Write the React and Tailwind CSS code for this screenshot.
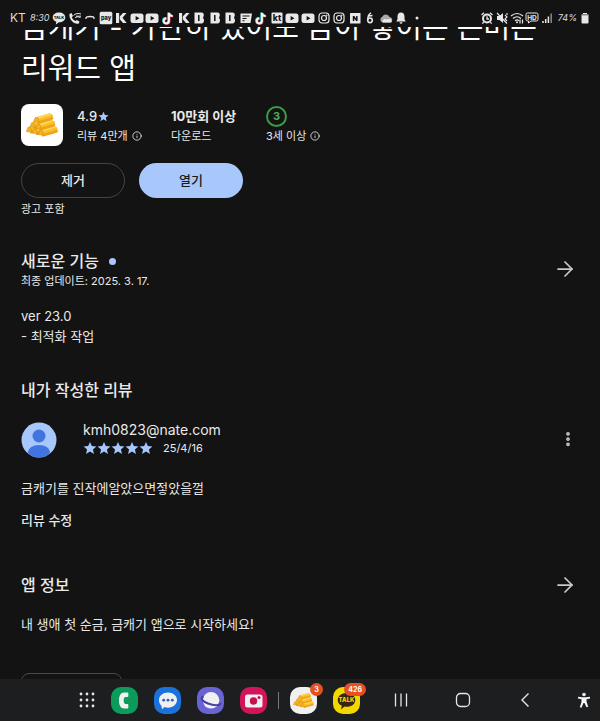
import { ArrowRight, Info, EllipsisVertical } from 'lucide-react';

const FONT = "font-['Inter','Noto_Sans_CJK_KR',sans-serif]";
const STAR = 'M12 1.5l3.1 7.2 7.9.7-6 5.1 1.8 7.7-6.8-4.1-6.8 4.1L7 14.5 1 9.4l7.9-.7z';

function Star({ className }) {
  return (
    <svg viewBox="0 0 24 24" className={className} fill="#a8c7fa">
      <path d={STAR} />
    </svg>
  );
}

function GoldBars({ className }) {
  // back to front, each pair is where the near end of a bar sits
  const bars = [
    [8, 25], [13.5, 26.5], [19.5, 28], [11.5, 20.5], [17, 22], [15, 15.5],
  ];
  return (
    <svg viewBox="0 0 41 41" className={className}>
      {bars.map(([x, y]) => (
        <g key={`${x}-${y}`}>
          <path d={`M${x} ${y - 2.5}l13-4 2.500 1.500 1 3.500-1 1.500-14 4z`} fill="#efa51a" />
          <path d={`M${x} ${y - 2.5}l13-4 2.500 1.500.5 2-13.500 4z`} fill="#fbc02d" />
          <path d={`M${x} ${y - 2.5}l13-4 2 1.200-13.200 4z`} fill="#ffdb62" />
          <path d={`M${x - 1} ${y - 2.5}l2.500.4 1.300 4.800-5.600-.9z`} fill="#f5b21f" stroke="#d48a10" strokeWidth=".5" strokeLinejoin="round" />
        </g>
      ))}
    </svg>
  );
}

function StatusIcon({ children }) {
  return (
    <svg viewBox="0 0 14 14" className="size-3.5 shrink-0" fill="#e8e8e8">
      {children}
    </svg>
  );
}

const DARK = '#131313';

function Glyph({ name }) {
  switch (name) {
    case 'talk':
      return (
        <StatusIcon>
          <path d="M7 1.500c3.600 0 6.300 2.100 6.300 4.900S10.600 11.300 7 11.300L3.800 13.500l.5-2.800C2.100 9.900.7 8.300.7 6.400.7 3.600 3.400 1.500 7 1.500z" />
          <text x="7" y="8" fontSize="4" fontWeight="800" textAnchor="middle" fill={DARK}>TALK</text>
        </StatusIcon>
      );
    case 'call':
      return (
        <StatusIcon>
          <path d="M1.500 3l2-1 1.500 3-1.200 1.300c.7 1.800 1.900 3 3.600 3.800L8.800 9l2.800 1.700-1 2C6 13.700.7 8.400 1.500 3z" />
          <path d="M5.500 4.500c1.500-2 5-2.500 7.500-1.500M7 7c1-1.500 3-1.500 5.500-.5M8 5.200h5" fill="none" stroke="#e8e8e8" strokeWidth="1" />
        </StatusIcon>
      );
    case 'arc':
      return (
        <StatusIcon>
          <path d="M3 8V7q0-1.500 4-1.500T11 7v1" fill="none" stroke="#e8e8e8" strokeWidth="1.300" />
        </StatusIcon>
      );
    case 'pay':
      return (
        <StatusIcon>
          <rect x=".7" y=".7" width="12.600" height="12.600" rx="1.500" />
          <text x="7" y="8.700" fontSize="5.500" fontWeight="800" textAnchor="middle" fill={DARK}>pay</text>
        </StatusIcon>
      );
    case 'k':
      return (
        <StatusIcon>
          <path d="M2 2h3.500v3.700L9 2h3.500L8.500 6.700l4.200 5.300H9L5.500 8v4H2z" />
          <path d="M5.500 1v12" stroke={DARK} strokeWidth=".7" />
        </StatusIcon>
      );
    case 'youtube':
      return (
        <StatusIcon>
          <rect x=".5" y="2.500" width="13" height="9.500" rx="2.500" />
          <path d="M5.600 5v4.500L9.500 7.250z" fill={DARK} />
        </StatusIcon>
      );
    case 'tiktok':
      return (
        <StatusIcon>
          <g fill="none" strokeWidth="2">
            <path d="M7.300 1.500v8a2.600 2.600 0 1 1-2.600-2.600M7.300 1.500q.3 3 3.700 3.300" stroke="#25d3cf" />
            <path d="M8.500 2.200v8a2.600 2.600 0 1 1-2.600-2.600M8.500 2.200q.3 3 3.700 3.300" stroke="#ee3a5b" />
            <path d="M7.900 1.800v8a2.600 2.600 0 1 1-2.600-2.600M7.900 1.800q.3 3 3.700 3.300" stroke="#f5f5f5" />
          </g>
        </StatusIcon>
      );
    case 'b':
      return (
        <StatusIcon>
          <path d="M2.500 1.500h7q2.500.2 2.300 3L11 6.700l1 2q.3 3.300-2.500 3.800h-7z" />
          <path d="M6.800 4v6" stroke={DARK} strokeWidth="1.500" />
        </StatusIcon>
      );
    case 'news':
      return (
        <StatusIcon>
          <path d="M1.500 2.500h11.500l-1.500 9.500h-10z" />
          <path d="M3.500 5h7M3.500 7.500h4M3.500 9.800h2" stroke={DARK} strokeWidth="1.100" />
        </StatusIcon>
      );
    case 'kt':
      return (
        <StatusIcon>
          <rect x="1.500" y="1.500" width="11" height="11" rx="1" />
          <text x="7" y="10.300" fontSize="8.500" fontWeight="800" textAnchor="middle" fill={DARK}>kt</text>
        </StatusIcon>
      );
    case 'instagram':
      return (
        <StatusIcon>
          <g fill="none" stroke="#e8e8e8" strokeWidth="1.200">
            <rect x="2" y="2" width="10" height="10" rx="3" />
            <circle cx="7" cy="7" r="2.500" />
          </g>
          <circle cx="9.800" cy="4.200" r=".8" />
        </StatusIcon>
      );
    case 'n':
      return (
        <StatusIcon>
          <rect x="2" y="2" width="10.500" height="10.500" rx=".5" />
          <path d="M4.800 10V5h1.500l1.800 2.600V5h1.500v5H8.200L6.300 7.400V10z" fill={DARK} />
        </StatusIcon>
      );
    case 'six':
      return (
        <StatusIcon>
          <circle cx="7" cy="9.300" r="2.300" fill="none" stroke="#e8e8e8" strokeWidth="1.600" />
          <path d="M4.800 8.500Q4.800 3.500 8 1.800M6 5l3.500-.5" fill="none" stroke="#e8e8e8" strokeWidth="1.500" />
        </StatusIcon>
      );
    case 'cloud':
      return (
        <StatusIcon>
          <path d="M4 11.500a3 3 0 0 1-.7-5.800 4 4 0 0 1 7.200.3 2.800 2.800 0 0 1 .7 5.500z" fill="#aaa" />
          <path d="M3.500 11.500q-.5-2 1.500-3.500l3 .5 3-.7q2 .7 1.500 3.700z" />
        </StatusIcon>
      );
    case 'bell':
      return (
        <StatusIcon>
          <path d="M7 1.500c-2.500 0-3.500 1.800-3.500 4v2.700L2.300 10.500h9.400l-1.200-2.300V5.500c0-2.200-1-4-3.500-4zM5.500 11.200h3Q8.300 12.800 7 12.800t-1.500-1.600z" />
        </StatusIcon>
      );
    default:
      return (
        <StatusIcon>
          <circle cx="7" cy="7" r="1.500" />
        </StatusIcon>
      );
  }
}

const NOTIFICATIONS = [
  'talk', 'call', 'arc', 'pay', 'k', 'youtube', 'youtube', 'tiktok', 'k', 'b', 'b', 'b',
  'news', 'tiktok', 'kt', 'youtube', 'youtube', 'instagram', 'instagram', 'n', 'six', 'cloud', 'bell', 'dot',
];

function StatusBar() {
  return (
    <header className="relative z-10 flex h-[27px] shrink-0 items-center bg-[#131313] pt-2 pr-2 pl-2.5 text-[#dedede]">
      <span className="w-5 text-xs">KT</span>
      <span className="w-[22px] text-[9px] italic">8:30</span>
      <div className="flex w-[372px] shrink-0 justify-between">
        {NOTIFICATIONS.map((name, i) => (
          <Glyph key={i} name={name} />
        ))}
      </div>
      <div className="ml-auto flex items-center gap-px">
        <StatusIcon>
          <circle cx="7" cy="7.500" r="4" fill="none" stroke="#e8e8e8" strokeWidth="2" />
          <path d="M1.500 4L4 1.800M12.500 4L10 1.800M3.500 11l-1 1.800M10.500 11l1 1.800M7 5.200V8h2" fill="none" stroke="#e8e8e8" strokeWidth="1.300" />
        </StatusIcon>
        <StatusIcon>
          <path d="M2 5h2.500L8 2v10L4.500 9H2z" />
          <path d="M2 2l10 10.500M10 4l2 2-2 2 2 2M12 2v2" fill="none" stroke="#e8e8e8" strokeWidth="1.100" />
        </StatusIcon>
        <StatusIcon>
          <g fill="none" stroke="#e8e8e8" strokeWidth="1.200">
            <path d="M1 5q6-5 12 0M3 7.500q4-3.500 8 0M5 9.700q2-1.700 4 0" />
            <path d="M10 8.500v4M12.500 8.500v4" />
          </g>
          <circle cx="7" cy="11.300" r="1" />
        </StatusIcon>
        <StatusIcon>
          <path d="M2.500 2h9q1.500 0 1.500 1.500v5q0 1.500-1.500 1.500H6l-2.500 2v-2h-1Q1 10 1 8.500v-5Q1 2 2.500 2z" fill="none" stroke="#e8e8e8" strokeWidth="1" />
          <text x="7" y="8.500" fontSize="6.500" fontWeight="700" textAnchor="middle">HD</text>
        </StatusIcon>
        <StatusIcon>
          <path d="M3 12v-2M5.700 12V8M8.400 12V5.500" stroke="#e8e8e8" strokeWidth="1.500" />
          <path d="M11.200 12V2.500" stroke="#8a8a8a" strokeWidth="1.500" />
        </StatusIcon>
        <span className="w-[22px] text-right text-[9px] italic">74%</span>
        <StatusIcon>
          <path d="M5 2h4v1.500H5zM3.500 3.500h7v8q0 1-1 1h-5q-1 0-1-1z" />
          <path d="M4 3h6v1.500H4z" fill="#8a8a8a" />
        </StatusIcon>
      </div>
    </header>
  );
}

function NavArrow({ label }) {
  return (
    <button aria-label={label} className="text-[#c9c9c9]">
      <ArrowRight className="size-6" strokeWidth={1.75} />
    </button>
  );
}

function AppTile({ label, className, children, badge }) {
  return (
    <button aria-label={label} className={`relative size-[27px] shrink-0 rounded-[10px] ${className}`}>
      {children}
      {badge && (
        <span className="absolute -top-1 -right-1.5 flex h-[13px] min-w-[13px] items-center justify-center rounded-full bg-[#e8501f] px-1 text-[7px] leading-none font-bold text-white">
          {badge}
        </span>
      )}
    </button>
  );
}

function Taskbar() {
  return (
    <nav className="flex h-[42px] shrink-0 items-center bg-[#1d1e20] pr-2 pl-[79px]">
      <div className="flex items-center gap-4">
        <button aria-label="앱" className="w-4">
          <svg viewBox="0 0 16 16" className="size-4" fill="#e6e6e6">
            {[2, 8, 14].map((x) => [2, 8, 14].map((y) => <circle key={`${x}${y}`} cx={x} cy={y} r="1.400" />))}
          </svg>
        </button>
        <AppTile label="전화" className="bg-[#0d9b5c]">
          <svg viewBox="0 0 27 27" fill="#f0f0f0">
            <path d="M16.500 5.500h-3C9.500 5.500 8 9 8 13.500s1.500 8 5.500 8h3q.8 0 .8-.8v-3q0-.8-.8-.8h-2.300c-1-.3-1.500-1.500-1.500-3.400s.5-3.100 1.500-3.400h2.300q.8 0 .8-.8v-3q0-.8-.8-.8z" />
          </svg>
        </AppTile>
        <AppTile label="메시지" className="bg-[#1a73dc]">
          <svg viewBox="0 0 27 27">
            <path d="M14 5.500c5 0 9 3.200 9 7.500s-4 7.700-9 7.700q-2 0-3.500-.6L8 22.200l-.6-3.500C5.800 17.300 5 15.300 5 13c0-4.300 4-7.500 9-7.500z" fill="#f0f0f0" />
            <g fill="#2462b8">
              <circle cx="9.700" cy="13.200" r="1.400" />
              <circle cx="14" cy="13.200" r="1.400" />
              <circle cx="18.300" cy="13.200" r="1.400" />
            </g>
          </svg>
        </AppTile>
        <AppTile label="인터넷" className="bg-[#6865d2]">
          <svg viewBox="0 0 27 27">
            <circle cx="14" cy="13.300" r="8.300" fill="#f0f0f0" />
            <path d="M6.500 9.500C3 11 4.500 14 11 16.500s12.500 2.300 12.500-.5" fill="none" stroke="#4540a5" strokeWidth="2" />
          </svg>
        </AppTile>
        <AppTile label="카메라" className="bg-[#d3145a]">
          <svg viewBox="0 0 27 27">
            <rect x="5" y="7.500" width="17.500" height="13" rx="2.500" fill="#f0f0f0" />
            <circle cx="13.500" cy="14" r="3.700" fill="#c3134f" />
            <circle cx="19" cy="10.500" r="1.500" fill="#c3134f" />
          </svg>
        </AppTile>
      </div>
      <span className="mx-[11px] h-[17px] w-px bg-[#77787a]" />
      <div className="flex items-center gap-4">
        <AppTile label="금캐기" className="bg-[#f0f0f0]" badge="3">
          <GoldBars className="size-[27px]" />
        </AppTile>
        <AppTile label="카카오톡" className="bg-[#f1d900]" badge="426">
          <svg viewBox="0 0 27 27">
            <path d="M13.500 6c5 0 8.800 3 8.800 6.900s-3.800 6.900-8.800 6.900q-1 0-2-.2L8 22.400l.8-3.600C6.300 17.600 4.700 15.500 4.700 12.900 4.700 9 8.500 6 13.500 6z" fill="#3a2414" />
            <text x="13.500" y="15.300" fontSize="6" fontWeight="800" textAnchor="middle" fill="#f1d900">TALK</text>
          </svg>
        </AppTile>
      </div>
      <div className="ml-auto flex items-center gap-[46px]">
        <button aria-label="최근 앱">
          <svg viewBox="0 0 16 16" className="size-4" stroke="#e6e6e6" strokeWidth="1.300">
            <path d="M2.500 1.500v13M8 1.500v13M13.500 1.500v13" />
          </svg>
        </button>
        <button aria-label="홈">
          <svg viewBox="0 0 16 16" className="size-4" fill="none" stroke="#e6e6e6" strokeWidth="1.300">
            <rect x="1.500" y="1.500" width="13" height="13" rx="4" />
          </svg>
        </button>
        <button aria-label="뒤로">
          <svg viewBox="0 0 16 16" className="size-4" fill="none" stroke="#e6e6e6" strokeWidth="1.400">
            <path d="M11.500 1.500L5 8l6.500 6.500" />
          </svg>
        </button>
      </div>
      <button aria-label="접근성" className="ml-[43px]">
        <svg viewBox="0 0 16 16" className="size-4" fill="#f5f5f5">
          <circle cx="8" cy="2.500" r="1.800" />
          <path d="M2 4.800l4 .5h4l4-.5v1.700l-3.500.7v2.300l1.700 5.300-1.700.4L8.500 11h-1l-2 4.700-1.700-.4 1.700-5.300V7.200L2 6.500z" />
        </svg>
      </button>
    </nav>
  );
}

export default function App() {
  return (
    <div className={`flex h-screen flex-col overflow-hidden bg-[#131313] text-[#e9e9e9] ${FONT}`}>
      <StatusBar />

      <main className="min-h-0 flex-1 px-[21px]">
        {/* title is scrolled half way under the status bar */}
        <h1 className="-mt-5 text-[29px] leading-[41px] break-keep text-white">
          금캐기 - 가만히 있어도 금이 쌓이는 돈버는 리워드 앱
        </h1>

        <section className="mt-[15px] flex h-[42px]">
          <div className="size-[42px] rounded-lg bg-white">
            <GoldBars className="size-[42px]" />
          </div>
          <div className="ml-3.5 w-[94px]">
            <p className="flex items-center text-[13px] leading-6 font-medium">
              4.9
              <Star className="ml-px size-[11px]" />
            </p>
            <p className="flex items-center gap-1 text-[11px] leading-4">
              리뷰 4만개 <Info className="size-2.5" />
            </p>
          </div>
          <div className="w-[95px]">
            <p className="text-[13px] leading-6 font-bold">10만회 이상</p>
            <p className="text-[11px] leading-4">다운로드</p>
          </div>
          <div>
            <div className="flex h-6 items-center">
              <span className="flex size-[21px] items-center justify-center rounded-full border-2 border-[#3d9a48] text-[11px] font-bold text-[#4caf57]">
                3
              </span>
            </div>
            <p className="flex items-center gap-1 text-[11px] leading-4">
              3세 이상 <Info className="size-2.5" />
            </p>
          </div>
        </section>

        <div className="mt-[17px] flex gap-3.5 text-[13px] font-medium">
          <button className="h-[35px] w-[104px] rounded-full border border-[#444]">제거</button>
          <button className="h-[35px] w-[104px] rounded-full bg-[#a8c7fa] text-[#1b1b1b]">열기</button>
        </div>
        <p className="mt-[3px] text-[11px] leading-4">광고 포함</p>

        <section className="mt-8">
          <div className="flex items-center justify-between pr-0.5">
            <div>
              <h2 className="flex items-center gap-2.5 text-base leading-6 font-medium">
                새로운 기능
                <span className="size-[7px] rounded-full bg-[#a8c7fa]" />
              </h2>
              <p className="text-[11px] leading-4">최종 업데이트: 2025. 3. 17.</p>
            </div>
            <NavArrow label="새로운 기능" />
          </div>
          <p className="mt-[17px] text-[13px] leading-5">
            ver 23.0
            <br />- 최적화 작업
          </p>
        </section>

        <section className="mt-8">
          <h2 className="text-base leading-6 font-medium">내가 작성한 리뷰</h2>
          <div className="mt-[18px] flex items-end pr-0.5">
            <svg viewBox="0 0 36 36" className="size-9">
              <circle cx="18" cy="18" r="17.500" fill="#a8c7fa" />
              <circle cx="18" cy="14" r="6.500" fill="#4274e0" />
              <path d="M6.800 30.500Q8 23 18 23t11.200 7.500Q25 35.500 18 35.500T6.800 30.500z" fill="#4274e0" />
            </svg>
            <div className="ml-[26px] flex-1 pb-0.5">
              <p className="text-sm leading-5">kmh0823@nate.com</p>
              <div className="flex items-center text-[11px] leading-4">
                {[1, 2, 3, 4, 5].map((n) => (
                  <Star key={n} className="size-3.5" />
                ))}
                <span className="ml-2.5">25/4/16</span>
              </div>
            </div>
            <button aria-label="더보기" className="self-center text-[#c9c9c9]">
              <EllipsisVertical className="size-[18px]" strokeWidth={3} />
            </button>
          </div>
          <p className="mt-5 text-[13px] leading-5">금캐기를 진작에알았으면젛았을껄</p>
          <button className="mt-3 block text-[13px] leading-5 font-medium">리뷰 수정</button>
        </section>

        <section className="mt-[43px]">
          <div className="flex items-center justify-between pr-0.5">
            <h2 className="text-base leading-6 font-medium">앱 정보</h2>
            <NavArrow label="앱 정보" />
          </div>
          <p className="mt-[17px] text-[13px] leading-5">내 생애 첫 순금, 금캐기 앱으로 시작하세요!</p>
          <div className="mt-[39px] h-8 w-[101px] rounded-lg border border-[#4a4a4a]" />
        </section>
      </main>

      <div className="relative z-10">
        <Taskbar />
      </div>
    </div>
  );
}
